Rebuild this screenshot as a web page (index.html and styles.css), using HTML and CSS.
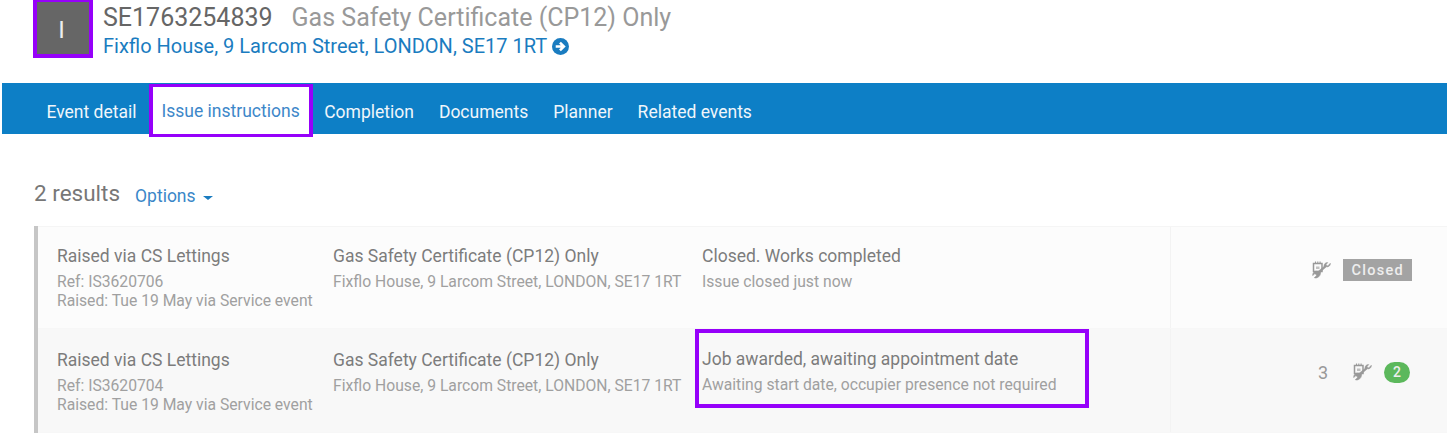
FILE: index.html
```html
<!DOCTYPE html>
<html lang="en">
<head>
    <meta charset="UTF-8">
    <meta name="viewport" content="width=device-width, initial-scale=1.0">
    <title>Issue instructions</title>
    <link rel="stylesheet" href="styles.css">
</head>
<body>
    <svg class="icon-defs" width="0" height="0" aria-hidden="true">
        <symbol id="job-icon" viewBox="0 0 18 18">
            <path d="M1 2.500h8.500v8H1z" fill="none" stroke="currentColor" stroke-width="1.500"/>
            <path d="M3 .5v2.500M5.300 .5v2.500M7.600 .5v2.500" fill="none" stroke="currentColor" stroke-width="1.100"/>
            <path d="M3.500 5.500h3.500v2.500H3.500z" fill="currentColor" opacity=".6"/>
            <path d="M17.800 2.300c.3 2.300-1.700 4-3.900 3.500L8 10.800c.5 2.300-.9 5.200-3.500 6-1 .3-1.900.2-2.700-.1l2.200-2-.4-1.500-1.600-.4-1.700 1.800c-.3-1.500.3-3.200 1.800-3.900 1.300-.7 2.500-.6 3.400-.2l6-5.100c-.3-2 1.400-4 3.700-3.800l-1.600 1.800.4 1.200 1.300.3z" fill="currentColor" stroke="currentColor" stroke-width=".6"/>
        </symbol>
    </svg>

    <div class="page">
        <header class="event-head">
            <div class="avatar">I</div>
            <div class="event-title">
                <h1><span class="event-ref">SE1763254839</span><span class="event-name">Gas Safety Certificate (CP12) Only</span></h1>
                <a class="event-address" href="#">Fixflo House, 9 Larcom Street, LONDON, SE17 1RT
                    <svg class="go-icon" viewBox="0 0 16 16" width="17" height="17">
                        <circle cx="8" cy="8" r="8" fill="currentColor"/>
                        <path d="M3.500 8h7M7.500 4.300 11.200 8l-3.700 3.700" fill="none" stroke="#fff" stroke-width="2.400"/>
                    </svg>
                </a>
            </div>
        </header>

        <nav class="tabs">
            <a href="#" class="tab">Event detail</a>
            <a href="#" class="tab active">Issue instructions</a>
            <a href="#" class="tab">Completion</a>
            <a href="#" class="tab">Documents</a>
            <a href="#" class="tab">Planner</a>
            <a href="#" class="tab">Related events</a>
        </nav>

        <div class="results-bar">
            <span class="results-count">2 results</span>
            <a href="#" class="options">Options <span class="caret"></span></a>
        </div>

        <div class="issue-list">
            <div class="issue">
                <div class="col col-source">
                    <div class="line-main">Raised via CS Lettings</div>
                    <div class="line-sub">Ref: IS3620706</div>
                    <div class="line-sub">Raised: Tue 19 May via Service event</div>
                </div>
                <div class="col col-job">
                    <div class="line-main">Gas Safety Certificate (CP12) Only</div>
                    <div class="line-sub">Fixflo House, 9 Larcom Street, LONDON, SE17 1RT</div>
                </div>
                <div class="col col-status">
                    <div class="status-box">
                        <div class="line-main">Closed. Works completed</div>
                        <div class="line-sub">Issue closed just now</div>
                    </div>
                </div>
                <div class="col-meta meta-closed">
                    <svg class="job-icon"><use href="#job-icon"/></svg>
                    <span class="label-closed">Closed</span>
                </div>
            </div>
            <div class="issue issue-alt">
                <div class="col col-source">
                    <div class="line-main">Raised via CS Lettings</div>
                    <div class="line-sub">Ref: IS3620704</div>
                    <div class="line-sub">Raised: Tue 19 May via Service event</div>
                </div>
                <div class="col col-job">
                    <div class="line-main">Gas Safety Certificate (CP12) Only</div>
                    <div class="line-sub">Fixflo House, 9 Larcom Street, LONDON, SE17 1RT</div>
                </div>
                <div class="col col-status">
                    <div class="status-box highlight">
                        <div class="line-main">Job awarded, awaiting appointment date</div>
                        <div class="line-sub">Awaiting start date, occupier presence not required</div>
                    </div>
                </div>
                <div class="col-meta meta-open">
                    <span class="meta-count">3</span>
                    <svg class="job-icon"><use href="#job-icon"/></svg>
                    <span class="badge-count">2</span>
                </div>
            </div>
        </div>
    </div>
</body>
</html>
```

FILE: styles.css
```css
* {
    box-sizing: border-box;
}
html, body {
    height: 433px;
    overflow: hidden;
}
body {
    margin: 0;
    background-color: #fff;
    font-family: Roboto, Arial, sans-serif;
    color: #777;
}
a {
    text-decoration: none;
}
.icon-defs {
    display: block;
}
.page {
    padding-left: 2px;
}
.event-head {
    display: flex;
    height: 83px;
    padding-left: 31px;
}
.avatar {
    width: 60px;
    height: 58px;
    background-color: #666;
    border: 4px solid #9600fa;
    border-top-width: 2px;
    color: #eee;
    font-size: 24px;
    line-height: 56px;
    padding-right: 3px;
    text-align: center;
}
.event-title {
    margin-left: 10px;
}
.event-title h1 {
    margin: 3px 0 0;
    font-size: 25px;
    font-weight: 400;
    line-height: 29px;
}
.event-ref {
    color: #666;
}
.event-name {
    margin-left: 19px;
    color: #999;
}
.event-address {
    display: block;
    margin-top: 1px;
    color: #1a7cc0;
    font-size: 20px;
    line-height: 26px;
}
.go-icon {
    vertical-align: -2px;
}
.tabs {
    display: flex;
    height: 51px;
    padding-left: 32px;
    background-color: #0d7fc6;
}
.tab {
    height: 51px;
    padding: 0 12.500px;
    color: #f0f6fb;
    font-size: 17.500px;
    line-height: 58px;
}
.tab:first-child {
    padding-right: 12px;
}
.tab.active {
    height: 53px;
    margin: 1px -1px 0 0;
    padding: 0 9px;
    background-color: #fff;
    border: 4px solid #9600fa;
    border-width: 3px 4px;
    color: #3d87c9;
    line-height: 49px;
}
.results-bar {
    display: flex;
    align-items: baseline;
    height: 92px;
    padding: 46px 0 0 32px;
}
.results-count {
    color: #777;
    font-size: 22.500px;
}
.options {
    margin-left: 15px;
    color: #3a87c8;
    font-size: 17.500px;
    position: relative;
    top: 1px;
}
.caret {
    display: inline-block;
    margin-left: 3px;
    vertical-align: 2px;
    border-top: 4px solid #1a7cc0;
    border-left: 5px solid transparent;
    border-right: 5px solid transparent;
}
.issue-list {
    margin-left: 32px;
    border-left: 4px solid #c6c6c6;
}
.issue {
    display: flex;
    height: 103px;
    background-color: #fcfcfc;
    border-top: 1px solid #f5f5f5;
    border-bottom: 1px solid #f7f7f7;
}
.issue-alt {
    height: 104px;
    background-color: #f8f8f8;
    border-top: none;
}
.col {
    flex: none;
    padding-top: 16px;
}
.issue-alt .col {
    padding-top: 18px;
}
.col-source {
    width: 277px;
    padding-left: 19px;
}
.col-job {
    width: 369px;
    padding-left: 18px;
}
.col-status {
    width: 487px;
    border-right: 1px solid #f3f3f3;
}
.status-box {
    height: 77px;
    padding-left: 18px;
}
.status-box.highlight {
    width: 394px;
    height: 79px;
    margin: -18px 0 0 11px;
    padding: 13px 0 0 3px;
    border: 4px solid #9600fa;
}
.line-main {
    color: #7c7c7c;
    font-size: 17.500px;
    line-height: 26px;
}
.line-sub {
    color: #a0a0a0;
    font-size: 15.700px;
    line-height: 18.500px;
}
.line-main + .line-sub {
    margin-top: 4px;
}
.col-meta {
    display: flex;
    flex: 1;
    align-items: center;
    justify-content: flex-end;
    height: 86px;
    padding-right: 35px;
}
.job-icon {
    width: 19px;
    height: 18px;
    color: #999;
}
.label-closed {
    margin-left: 12px;
    padding: 1px 8px 0;
    background-color: #a3a3a3;
    color: #eee;
    font-size: 14.500px;
    font-weight: 500;
    letter-spacing: 1.300px;
    line-height: 21px;
}
.meta-count {
    margin-right: 25px;
    color: #999;
    font-size: 18px;
}
.badge-count {
    margin-left: 12px;
    padding: 0 9px;
    background-color: #5cb85c;
    border-radius: 11px;
    color: #eee;
    font-size: 14px;
    font-weight: 500;
    line-height: 21px;
}
.meta-open {
    padding-right: 37px;
}
```
